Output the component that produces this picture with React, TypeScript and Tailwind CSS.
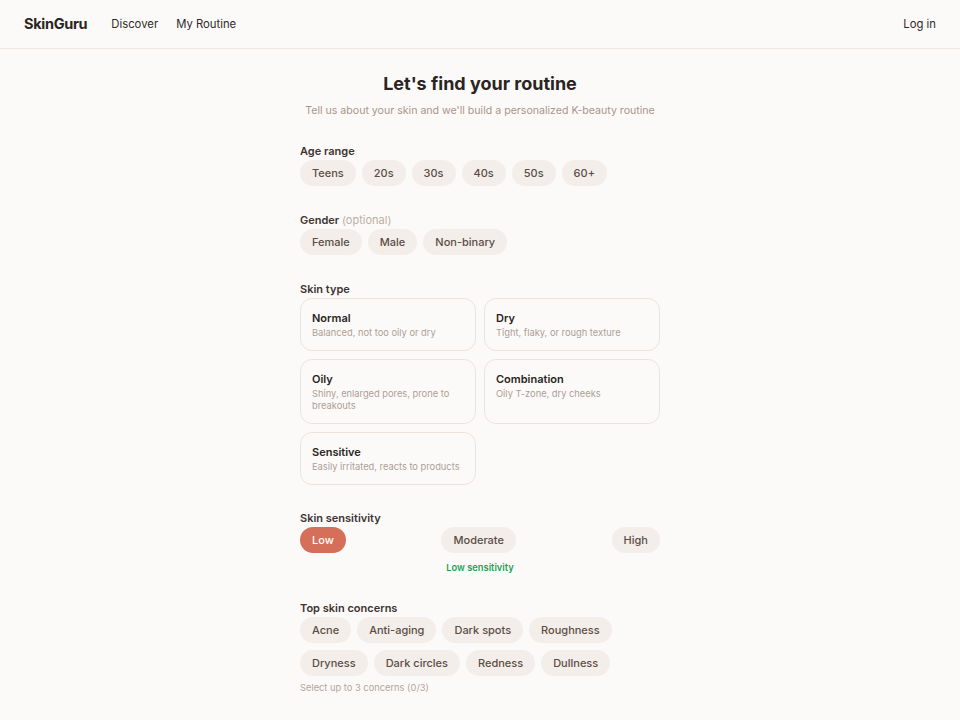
import React, { useState } from 'react';

const AGES = ['Teens', '20s', '30s', '40s', '50s', '60+'];
const GENDERS = ['Female', 'Male', 'Non-binary'];
const SKIN_TYPES = [
	{ name: 'Normal', desc: 'Balanced, not too oily or dry' },
	{ name: 'Dry', desc: 'Tight, flaky, or rough texture' },
	{ name: 'Oily', desc: 'Shiny, enlarged pores, prone to breakouts' },
	{ name: 'Combination', desc: 'Oily T-zone, dry cheeks' },
	{ name: 'Sensitive', desc: 'Easily irritated, reacts to products' },
];
const LEVELS = ['Low', 'Moderate', 'High'];
const CONCERNS = ['Acne', 'Anti-aging', 'Dark spots', 'Roughness', 'Dryness', 'Dark circles', 'Redness', 'Dullness'];

function Pill({ label, active, onClick }: { label: string; active?: boolean; onClick?: () => void }) {
	return (
		<button
			onClick={onClick}
			className={
				'h-[26px] px-[12px] rounded-full text-[11px] font-medium ' +
				(active ? 'bg-[#d4705a] text-white' : 'bg-[#f3eeea] text-[#5b4d45]')
			}
		>
			{label}
		</button>
	);
}

function Label({ children }: { children: React.ReactNode }) {
	return <h2 className="text-[11px] leading-[16px] font-semibold text-[#3d3430] mb-px">{children}</h2>;
}

export default function App() {
	const [level, setLevel] = useState('Low');
	const [skin, setSkin] = useState<string | null>(null);
	const [concerns, setConcerns] = useState<string[]>([]);

	const toggleConcern = (c: string) =>
		setConcerns(list => (list.includes(c) ? list.filter(x => x !== c) : list.length < 3 ? [...list, c] : list));

	return (
		<div className="min-h-screen bg-[#fcfaf9] text-[#2a2522]" style={{ fontFamily: 'Inter, "Noto Sans", sans-serif' }}>
			{/* top bar */}
			<header className="h-[49px] border-b border-[#efe7e2] flex items-center justify-between px-6">
				<div className="flex items-center">
					<span className="text-[14.5px] font-bold tracking-[-0.3px] text-[#2a2522]">SkinGuru</span>
					<nav className="flex gap-[18px] ml-6 text-[11.3px] text-[#2f2926]">
						<a href="#">Discover</a>
						<a href="#">My Routine</a>
					</nav>
				</div>
				<a href="#" className="text-[11.3px] text-[#2f2926]">Log in</a>
			</header>

			<main className="w-[360px] mx-auto pt-[21px] pb-6">
				<h1 className="text-center text-lg leading-[28px] font-bold">Let's find your routine</h1>
				<p className="text-center text-[10.6px] leading-[16px] whitespace-nowrap text-[#a8958a] mt-[5px]">
					Tell us about your skin and we'll build a personalized K-beauty routine
				</p>

				<section className="mt-[24px]">
					<Label>Age range</Label>
					<div className="flex flex-wrap gap-1.5">
						{AGES.map(a => <Pill key={a} label={a} />)}
					</div>
				</section>

				<section className="mt-[26px]">
					<Label>
						Gender <span className="font-normal text-[#bcaea5]">(optional)</span>
					</Label>
					<div className="flex flex-wrap gap-1.5">
						{GENDERS.map(g => <Pill key={g} label={g} />)}
					</div>
				</section>

				<section className="mt-[26px]">
					<Label>Skin type</Label>
					<div className="grid grid-cols-2 gap-2">
						{SKIN_TYPES.map(t => (
							<button
								key={t.name}
								onClick={() => setSkin(t.name)}
								className={
									'flex flex-col items-start justify-start text-left border rounded-xl px-[11px] pt-3 pb-[11px] bg-[#fcfaf9] ' +
									(skin === t.name ? 'border-[#d4705a]' : 'border-[#ede3dd]')
								}
							>
								<div className="text-[11px] leading-[14px] font-semibold text-[#2a2522]">{t.name}</div>
								<div className="text-[9.3px] leading-[12px] text-[#ad9e95] mt-[2px]">{t.desc}</div>
							</button>
						))}
					</div>
				</section>

				<section className="mt-[25px]">
					<Label>Skin sensitivity</Label>
					<div className="flex justify-between">
						{LEVELS.map(l => <Pill key={l} label={l} active={level === l} onClick={() => setLevel(l)} />)}
					</div>
					<p className="text-center text-[9.3px] leading-[12px] font-semibold text-[#1ea154] mt-[9px]">{level} sensitivity</p>
				</section>

				<section className="mt-[26px]">
					<Label>Top skin concerns</Label>
					<div className="flex flex-wrap gap-x-1.5 gap-y-[7px]">
						{CONCERNS.map(c => (
							<Pill key={c} label={c} active={concerns.includes(c)} onClick={() => toggleConcern(c)} />
						))}
					</div>
					<p className="text-[9.3px] leading-[12px] text-[#b4a59c] mt-[6px]">Select up to 3 concerns ({concerns.length}/3)</p>
				</section>
			</main>
		</div>
	);
}
